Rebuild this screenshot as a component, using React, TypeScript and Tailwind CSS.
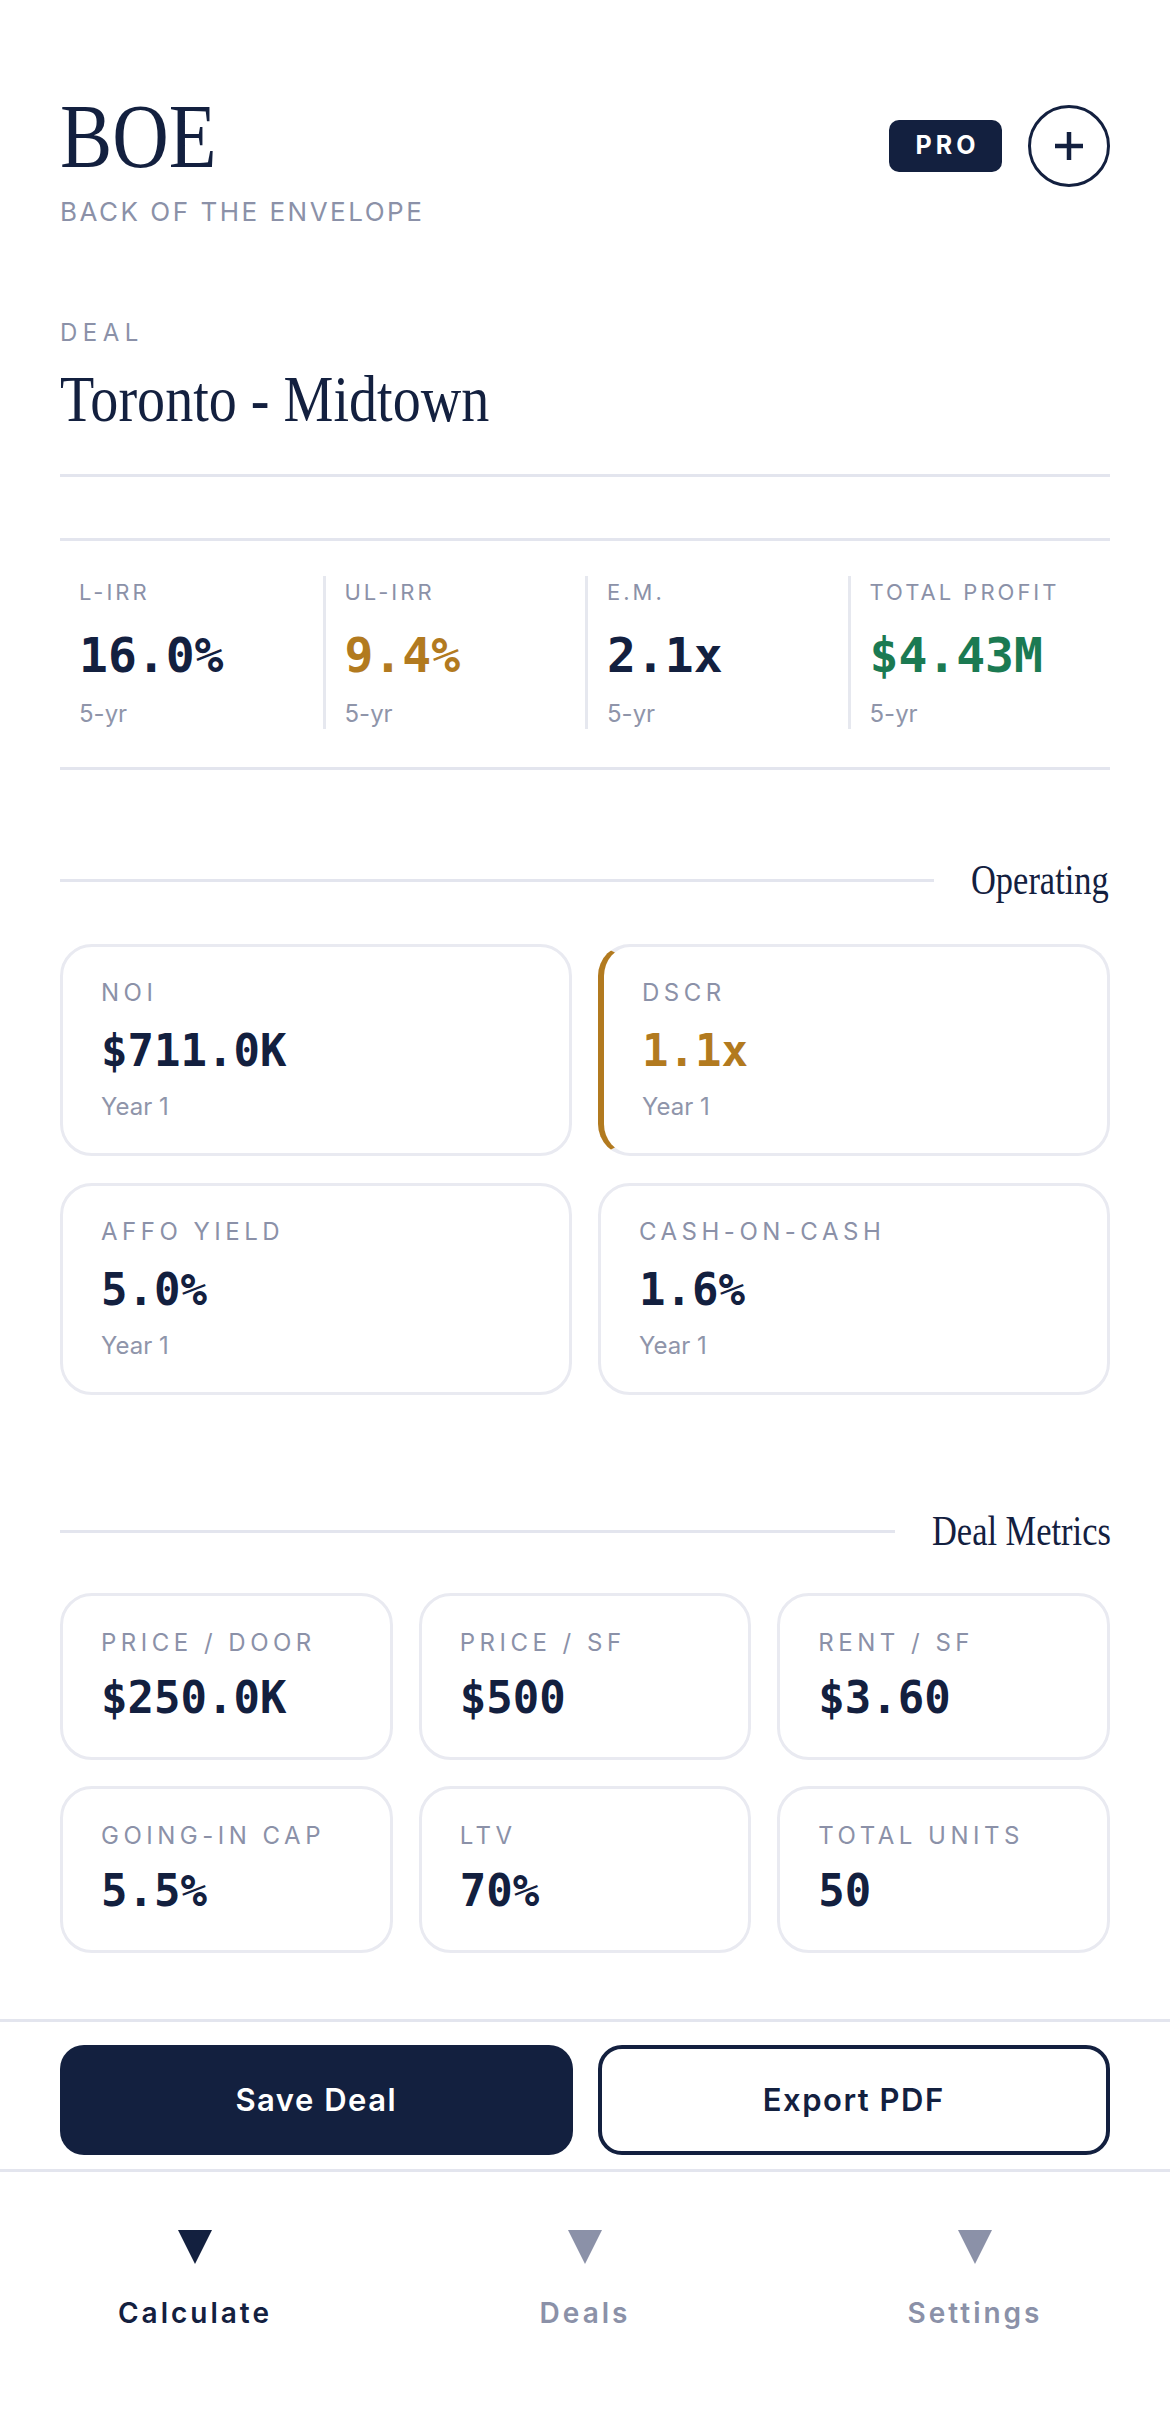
import React from 'react';

const SERIF = "font-['Liberation_Serif',serif]";
const SANS = "font-['Inter',sans-serif]";
const MONO = "font-['DejaVu_Sans_Mono',monospace]";

type Tone = 'navy' | 'amber' | 'green';

const toneClass: Record<Tone, string> = {
  navy: 'text-[#13203f]',
  amber: 'text-[#b27a1f]',
  green: 'text-[#1b7a52]',
};

const returns: { label: string; value: string; tone: Tone }[] = [
  { label: 'L-IRR', value: '16.0%', tone: 'navy' },
  { label: 'UL-IRR', value: '9.4%', tone: 'amber' },
  { label: 'E.M.', value: '2.1x', tone: 'navy' },
  { label: 'TOTAL PROFIT', value: '$4.43M', tone: 'green' },
];

const operating: { label: string; value: string; tone: Tone; flagged?: boolean }[] = [
  { label: 'NOI', value: '$711.0K', tone: 'navy' },
  { label: 'DSCR', value: '1.1x', tone: 'amber', flagged: true },
  { label: 'AFFO YIELD', value: '5.0%', tone: 'navy' },
  { label: 'CASH-ON-CASH', value: '1.6%', tone: 'navy' },
];

const dealMetrics = [
  { label: 'PRICE / DOOR', value: '$250.0K' },
  { label: 'PRICE / SF', value: '$500' },
  { label: 'RENT / SF', value: '$3.60' },
  { label: 'GOING-IN CAP', value: '5.5%' },
  { label: 'LTV', value: '70%' },
  { label: 'TOTAL UNITS', value: '50' },
];

const tabs = [
  { label: 'Calculate', active: true },
  { label: 'Deals', active: false },
  { label: 'Settings', active: false },
];

// serif display type is squeezed horizontally to get the narrow editorial look
function SectionHeading({ title, width, className = '' }: { title: string; width: string; className?: string }) {
  return (
    <div className={`flex items-center gap-[37px] ${className}`}>
      <div className="h-[3px] flex-1 bg-[#e3e5ee]" />
      <h2 className={`${SERIF} ${width} shrink-0 whitespace-nowrap text-[42px] leading-[48px] text-[#13203f]`}>
        <span className="inline-block origin-left scale-x-[0.82]">{title}</span>
      </h2>
    </div>
  );
}

function Triangle({ active }: { active: boolean }) {
  return (
    <svg width="34" height="34" viewBox="0 0 34 34">
      <polygon points="0,0 34,0 17,34" fill={active ? '#13203f' : '#8b91a8'} />
    </svg>
  );
}

export default function App() {
  return (
    <div className={`${SANS} flex h-[2423px] w-[1170px] flex-col bg-white`}>
      <main className="flex-1 px-[60px] pt-[92px]">
        {/* brand header */}
        <header className="flex items-start justify-between">
          <div>
            <h1 className={`${SERIF} whitespace-nowrap text-[90px] leading-[90px] text-[#13203f]`}>
              <span className="inline-block origin-left scale-x-[0.87]">BOE</span>
            </h1>
            <p className="mt-[14px] text-[26px] leading-[32px] tracking-[2.5px] text-[#8b91a8]">
              BACK OF THE ENVELOPE
            </p>
          </div>
          <div className="mt-[13px] flex items-center gap-[26px]">
            <span className="flex h-[52px] w-[113px] items-center justify-center rounded-[10px] bg-[#13203f] pl-[4px] text-[25px] font-bold tracking-[4px] text-white">
              PRO
            </span>
            <button className="flex h-[82px] w-[82px] items-center justify-center rounded-full border-[3px] border-[#13203f]">
              <svg width="28" height="28" viewBox="0 0 28 28">
                <path d="M14 0v28M0 14h28" stroke="#13203f" strokeWidth="4.5" />
              </svg>
            </button>
          </div>
        </header>

        {/* deal name */}
        <section className="mt-[90px] border-b-[3px] border-[#e3e5ee] pb-[38px]">
          <p className="text-[24px] leading-[30px] tracking-[5.5px] text-[#8b91a8]">DEAL</p>
          <p className={`${SERIF} mt-[14px] whitespace-nowrap text-[66px] leading-[74px] text-[#13203f]`}>
            <span className="inline-block origin-left scale-x-[0.85]">Toronto - Midtown</span>
          </p>
        </section>

        {/* returns strip */}
        <section className="mt-[61px] grid grid-cols-4 border-y-[3px] border-[#e3e5ee] pt-[35px] pb-[38px]">
          {returns.map((r, i) => (
            <div key={r.label} className={`px-[19px] pt-[2px] ${i > 0 ? 'border-l-[3px] border-[#e6e8ef]' : ''}`}>
              <p className="text-[22px] leading-[28px] tracking-[3px] text-[#8b91a8]">{r.label}</p>
              <p className={`${MONO} mt-[21px] text-[48px] font-bold leading-[56px] ${toneClass[r.tone]}`}>{r.value}</p>
              <p className="mt-[16px] text-[24px] leading-[30px] text-[#8f95aa]">5-yr</p>
            </div>
          ))}
        </section>

        <SectionHeading title="Operating" width="w-[139px]" className="mt-[86px]" />

        <section className="mt-[40px] grid grid-cols-2 gap-x-[26px] gap-y-[27px]">
          {operating.map((m) => (
            <div
              key={m.label}
              className={`rounded-[32px] border-[3px] border-[#e9eaf1] px-[38px] pt-[31px] pb-[31px] ${
                m.flagged ? 'border-l-[6px] border-l-[#b27a1f]' : ''
              }`}
            >
              <p className="text-[24px] leading-[30px] tracking-[4.5px] text-[#8b91a8]">{m.label}</p>
              <p className={`${MONO} mt-[17px] text-[44px] font-bold leading-[52px] ${toneClass[m.tone]}`}>{m.value}</p>
              <p className="mt-[15px] text-[24px] leading-[30px] text-[#8f95aa]">Year 1</p>
            </div>
          ))}
        </section>

        <SectionHeading title="Deal Metrics" width="w-[178px]" className="mt-[112px]" />

        <section className="mt-[38px] grid grid-cols-3 gap-x-[26px] gap-y-[26px]">
          {dealMetrics.map((m) => (
            <div key={m.label} className="rounded-[32px] border-[3px] border-[#e9eaf1] px-[38px] pt-[32px] pb-[33px]">
              <p className="text-[24px] leading-[30px] tracking-[4.5px] text-[#8b91a8]">{m.label}</p>
              <p className={`${MONO} mt-[14px] text-[44px] font-bold leading-[52px] text-[#13203f]`}>{m.value}</p>
            </div>
          ))}
        </section>
      </main>

      {/* action bar */}
      <footer className="border-t-[3px] border-[#e3e5ee]">
        <div className="grid grid-cols-2 gap-[25px] px-[60px] pt-[23px] pb-[14px]">
          <button className="h-[110px] rounded-[24px] bg-[#13203f] text-[31px] font-semibold tracking-[1.5px] text-white">
            Save Deal
          </button>
          <button className="h-[110px] rounded-[24px] border-[4px] border-[#13203f] text-[31px] font-semibold tracking-[1.5px] text-[#13203f]">
            Export PDF
          </button>
        </div>
        <nav className="grid h-[254px] grid-cols-3 border-t-[3px] border-[#e3e5ee] pt-[58px]">
          {tabs.map((t) => (
            <div key={t.label} className="flex flex-col items-center">
              <Triangle active={t.active} />
              <span
                className={`mt-[32px] text-[28px] font-semibold leading-[34px] tracking-[3px] ${
                  t.active ? 'text-[#13203f]' : 'text-[#8b91a8]'
                }`}
              >
                {t.label}
              </span>
            </div>
          ))}
        </nav>
      </footer>
    </div>
  );
}
